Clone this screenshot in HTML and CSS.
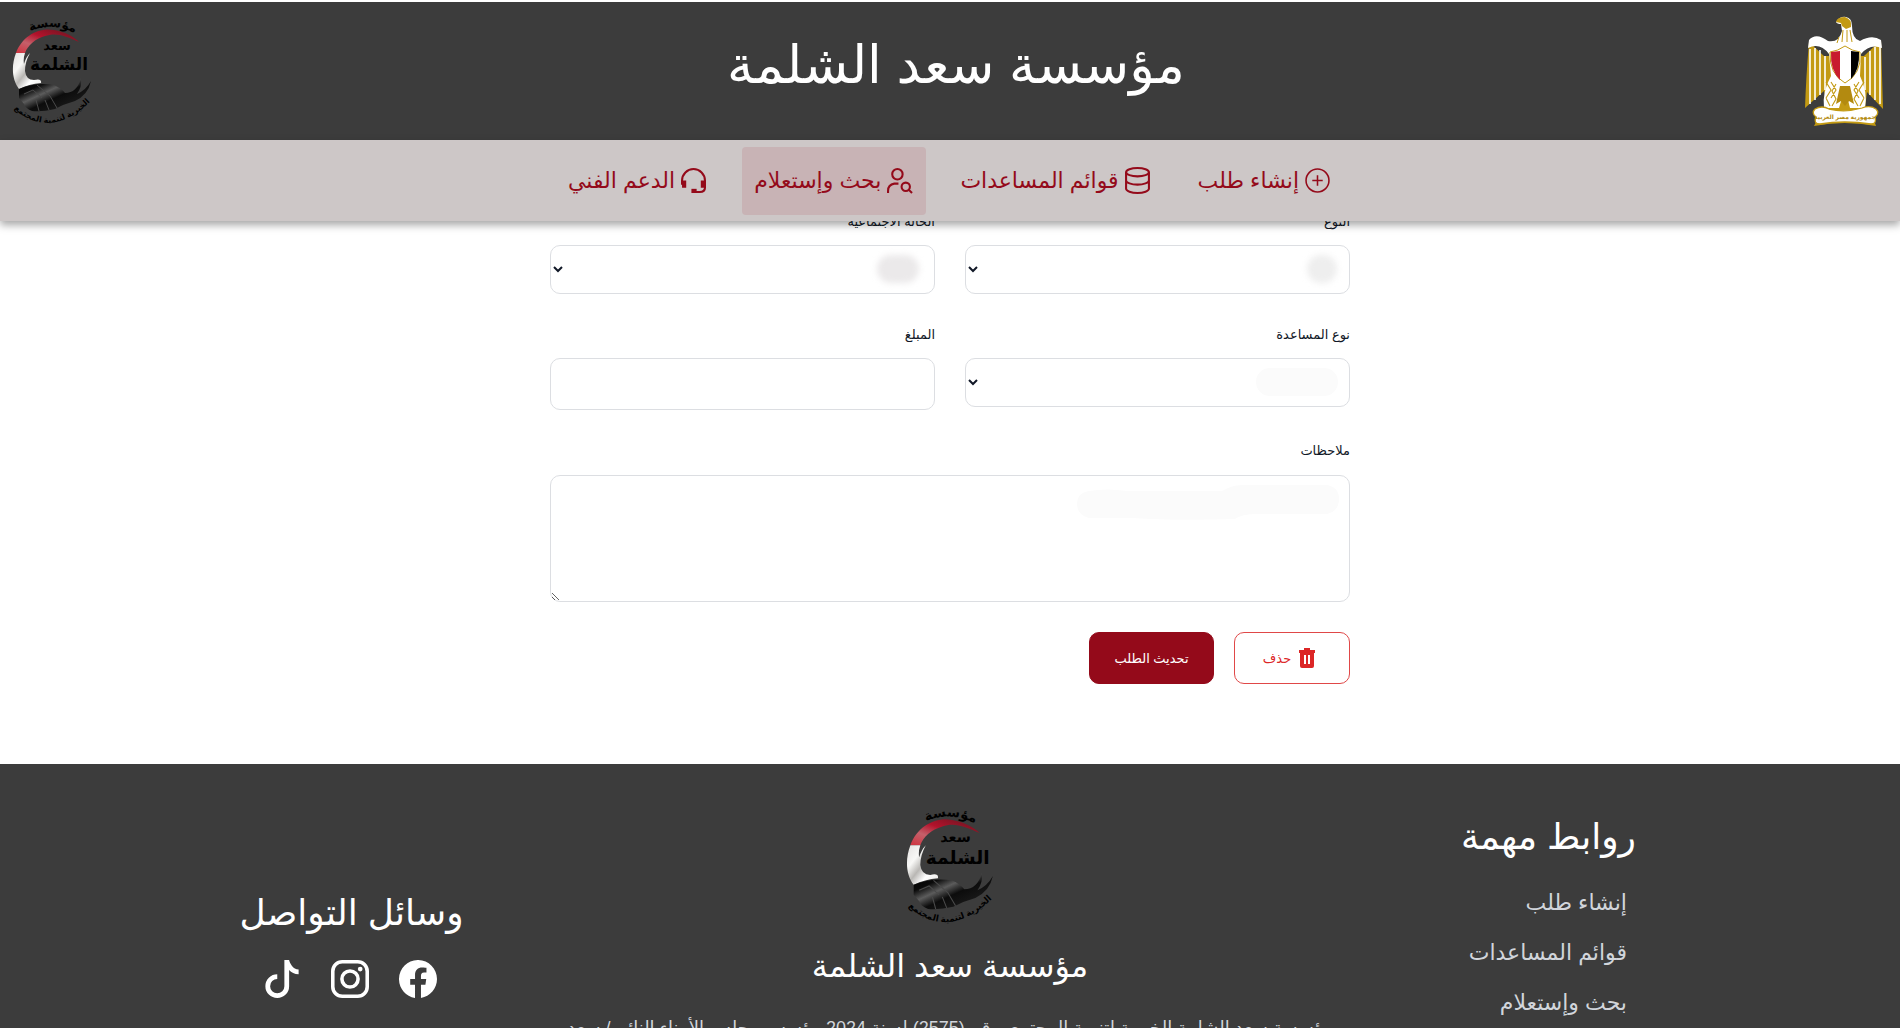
FILE: index.html
```html
<!DOCTYPE html>
<html lang="ar" dir="rtl">
<head>
<meta charset="utf-8">
<title>مؤسسة سعد الشلمة</title>
<meta name="viewport" content="width=device-width, initial-scale=1">
<link rel="stylesheet" href="styles.css">
</head>
<body>
<svg class="defs" aria-hidden="true">
  <defs>
    <linearGradient id="redBand" x1="0" y1="1" x2="1" y2="0"><stop offset="0" stop-color="#d0333f"/><stop offset=".3" stop-color="#c4606a"/><stop offset=".55" stop-color="#b3122b"/><stop offset="1" stop-color="#5d1620"/></linearGradient>
    <linearGradient id="whiteBand" x1="0" y1="0" x2="1" y2="1"><stop offset="0" stop-color="#e4e2e0"/><stop offset=".3" stop-color="#f8f8f6"/><stop offset=".5" stop-color="#b9b7b4"/><stop offset=".7" stop-color="#fff"/><stop offset="1" stop-color="#e9e8e5"/></linearGradient>
    <linearGradient id="hand" x1="0" y1="0" x2="1" y2="1"><stop offset="0" stop-color="#000"/><stop offset=".25" stop-color="#0a0a0a"/><stop offset=".4" stop-color="#5c5c5c"/><stop offset=".55" stop-color="#0c0c0c"/><stop offset="1" stop-color="#262626"/></linearGradient>
    <symbol id="logo" viewBox="0 0 80 106">
      <path id="arcTop" d="M15 15Q40 2 66 17" fill="none"/>
      <path id="arcBottom" d="M0 89Q38 124 80 82" fill="none"/>
      <text class="logo-arc-top"><textPath href="#arcTop" startOffset="50%" text-anchor="middle">مؤسسة</textPath></text>
      <path d="M4 35C10 18 27 9 42 12C53 14 61 18 67 24C54 18 44 14 33 18C23 21 16 27 13 35Z" fill="url(#redBand)"/>
      <path d="M4 35H13Q11 41 12 46Q14 39 18 35Q13 44 13 53Q14 62 22 62Q30 60 29 65Q17 66 7 71C0 62-1 48 4 35Z" fill="url(#whiteBand)"/>
      <path d="M7 71Q24 64 42 67Q49 70 53 75Q65 75 69 60Q70 69 65 76Q74 72 79 63Q76 77 63 83Q52 86 43 91Q30 94 20 93Q13 90 12 86L7 80Z" fill="url(#hand)"/>
      <path d="M12 76L21 72L30 80M25 67L38 78L45 90M24 82L27 93M33 82L37 92" fill="none" stroke="#4a4a4a" stroke-width="1"/>
      <text class="logo-name-small" x="45" y="32" text-anchor="middle">سعد</text>
      <text class="logo-name" x="47" y="52" text-anchor="middle">الشلمة</text>
      <text class="logo-arc"><textPath href="#arcBottom" startOffset="50%" text-anchor="middle">الخيرية لتنمية المجتمع</textPath></text>
    </symbol>
  </defs>
</svg>

<div class="app">
  <header class="topbar">
    <svg class="eagle" viewBox="0 0 80 110" role="img" aria-label="جمهورية مصر العربية">
      <path d="M5 26Q2 62 1 92L20 75L24 92Q16 93 9 96L13 104L10 110Q40 104 72 110L70 104L74 98L61 92L63 76L79 93Q78 60 77 24L60 40H20Z" fill="#c39a13"/>
      <path d="M5 24Q12 16 24 25Q35 27 38 15L37 8Q33 8 32 6Q36 0 42 1Q48 2 48 10Q48 23 56 25Q68 18 77 24L78 32Q66 27 57 38L56 60Q64 76 61 92H46L41 72L35 92H20Q18 76 27 60L25 38Q16 26 4 32Z" fill="#fff"/>
      <path d="M32 6Q33 1 41 1Q48 3 47 11L42 13L38 10L37 7Z" fill="#c39a13"/>
      <path d="M6 33V88M11 32V84M16 34V79M21 40V74M76 31V88M71 31V84M66 35V79M61 41V74" stroke="#fff" stroke-width="1.6"/>
      <path d="M39 14L38 26M43 14V26M46 14L48 26M35 21L33 27" stroke="#c39a13" stroke-width="1"/>
      <path d="M22 66l5 8-5 8m5-16l5 8-5 8m-5 0l4 8m6-22l-4 7 4 8-4 7M60 66l-5 8 5 8m-5-16l-5 8 5 8m5 0l-4 8m-6-22l4 7-4 8 4 7" fill="none" stroke="#c39a13" stroke-width="1.1"/>
      <path d="M36 70H46L50 88L45 85L41 90L37 85L32 88Z" fill="#b38a10"/>
      <path d="M26 36Q34 35 41 30Q48 35 56 36Q58 58 41 67Q25 58 26 36Z" fill="#fff" stroke="#c39a13"/>
      <path d="M27 36L36 35V64Q26 54 27 36Z" fill="#c81c2e"/>
      <path d="M47 35L55 36Q56 54 47 63Z" fill="#000"/>
      <path d="M11 93Q18 89 25 93Q41 97 58 92Q66 89 72 93Q76 97 71 101Q73 108 67 108Q40 104 16 108Q9 108 12 101Q7 97 11 93Z" fill="#fff" stroke="#c39a13" stroke-width="1.3"/>
      <text class="eagle-text" x="41" y="103" text-anchor="middle">جمهورية مصر العربية</text>
    </svg>
    <h1 class="title">مؤسسة سعد الشلمة</h1>
    <svg class="logo" role="img" aria-label="شعار المؤسسة"><use href="#logo"/></svg>
  </header>

  <nav class="nav">
    <a class="nav-link" href="#create">
      <svg class="icon" viewBox="0 0 24 24"><circle cx="12" cy="12" r="11" stroke-width="1.5"/><path d="M12 7v10M7 12h10" stroke-width="1.5"/></svg>
      <span>إنشاء طلب</span></a>
    <a class="nav-link" href="#lists">
      <svg class="icon icon-tall" viewBox="0 0 24 26"><ellipse cx="12" cy="5" rx="11" ry="4"/><path d="M1 5v16c0 2 5 4 11 4s11-2 11-4V5M1 13c0 2 5 4 11 4s11-2 11-4"/></svg>
      <span>قوائم المساعدات</span></a>
    <a class="nav-link active" href="#search">
      <svg class="icon" viewBox="0 0 24 24"><circle cx="10" cy="6" r="5"/><path d="M1 24v-2q0-6 6-7h4"/><circle cx="18" cy="18" r="4"/><path d="M21 21l3 3"/></svg>
      <span>بحث وإستعلام</span></a>
    <a class="nav-link" href="#support">
      <svg class="icon" viewBox="0 0 24 24"><path d="M1 16v-4a11 11 0 0 1 22 0v7q0 4-5 4h-6"/><path d="M3 12v7M21 12v7" stroke-width="4"/><path d="M10 22h5" stroke-width="4"/></svg>
      <span>الدعم الفني</span></a>
  </nav>

  <div class="viewport">
    <main class="main">
      <form class="form">
        <div class="field">
          <label for="gender">النوع</label>
          <div class="control"><select id="gender"><option></option></select><span class="smudge smudge-dot"></span></div>
        </div>
        <div class="field">
          <label for="marital">الحالة الاجتماعية</label>
          <div class="control"><select id="marital"><option></option></select><span class="smudge smudge-oval"></span></div>
        </div>
        <div class="field">
          <label for="aid">نوع المساعدة</label>
          <div class="control"><select id="aid"><option></option></select><span class="smudge smudge-pill"></span></div>
        </div>
        <div class="field">
          <label for="amount">المبلغ</label>
          <input id="amount" type="text">
        </div>
        <div class="field wide">
          <label for="notes">ملاحظات</label>
          <div class="control"><textarea id="notes"></textarea>
            <svg class="smudge-notes" viewBox="0 0 262 36"><path d="M12 6Q30 3 50 6H145Q155 0 165 0H250Q262 2 262 14T250 29H180Q165 29 158 34Q100 36 55 33H12Q0 30 0 19T12 6Z"/></svg></div>
        </div>
        <div class="actions wide">
          <button class="btn btn-delete" type="button">
            <svg class="trash" viewBox="0 0 16 20"><path d="M5 0h6v2h5v3H0V2h5zM1 5h14v13q0 2-2 2H3q-2 0-2-2z"/><path d="M6 7v9M10 7v9" stroke="#fff" stroke-width="2"/></svg>
            <span>حذف</span></button>
          <button class="btn btn-submit" type="submit">تحديث الطلب</button>
        </div>
      </form>
    </main>

    <footer class="footer">
      <section class="links">
        <h2>روابط مهمة</h2>
        <ul>
          <li><a href="#create">إنشاء طلب</a></li>
          <li><a href="#lists">قوائم المساعدات</a></li>
          <li><a href="#search">بحث وإستعلام</a></li>
        </ul>
      </section>
      <section class="about">
        <svg class="logo logo-large" role="img" aria-label="شعار المؤسسة"><use href="#logo"/></svg>
        <h2>مؤسسة سعد الشلمة</h2>
        <p>مؤسسة سعد الشلمة الخيرية لتنمية المجتمع برقم (2575) لسنة 2024 مؤسس مجلس الأمناء النائب/ سعد</p>
      </section>
      <section class="social">
        <h2>وسائل التواصل</h2>
        <div class="social-icons">
          <a href="#facebook" aria-label="فيسبوك"><svg viewBox="0 0 16 16"><path d="M16 8.049c0-4.446-3.582-8.05-8-8.05C3.58 0-.002 3.603-.002 8.05c0 4.017 2.926 7.347 6.75 7.951v-5.625h-2.03V8.05H6.75V6.275c0-2.017 1.195-3.131 3.022-3.131.876 0 1.791.157 1.791.157v1.98h-1.009c-.993 0-1.303.621-1.303 1.258v1.51h2.218l-.354 2.326H9.25V16c3.824-.604 6.75-3.934 6.75-7.951"/></svg></a>
          <a href="#instagram" aria-label="إنستغرام"><svg viewBox="0 0 16 16"><rect x=".75" y=".75" width="14.5" height="14.5" rx="4" fill="none" stroke="#fff" stroke-width="1.5"/><circle cx="8" cy="8" r="3.4" fill="none" stroke="#fff" stroke-width="1.5"/><circle cx="12.3" cy="3.8" r="1"/></svg></a>
          <a href="#tiktok" aria-label="تيك توك"><svg viewBox="0 0 16 16"><path d="M9 0h1.98c.144.715.54 1.617 1.235 2.512C12.895 3.389 13.797 4 15 4v2c-1.753 0-3.07-.814-4-1.829V11a5 5 0 1 1-5-5v2a3 3 0 1 0 3 3z"/></svg></a>
        </div>
      </section>
    </footer>
  </div>
</div>
</body>
</html>
```
FILE: styles.css
```css
* { box-sizing: border-box; }
body {
  margin: 0;
  background: #fff;
  color: #111827;
  font-family: "Liberation Sans", "DejaVu Sans", sans-serif;
}
h1, h2, p, ul { margin: 0; padding: 0; font-weight: 400; }
ul { list-style: none; }
a { text-decoration: none; color: inherit; }
.defs { position: absolute; width: 0; height: 0; }

.app {
  display: flex;
  flex-direction: column;
  height: 100vh;
  padding: 2px 0;
  overflow: hidden;
}

.topbar {
  display: flex;
  flex: none;
  align-items: center;
  justify-content: space-between;
  height: 138px;
  padding: 0 16px 0 12px;
  background: #3c3c3c;
  color: #fff;
}
.title { font-size: 53px; line-height: 72px; padding-bottom: 12px; }
.eagle { width: 80px; height: 110px; }
.logo { width: 80px; height: 106px; overflow: visible; }
.topbar .logo { margin-right: 16px; }
.logo-large { width: 88px; height: 118px; }
.logo-arc { font-size: 8px; font-weight: 700; }
.logo-arc-top { font-size: 12px; font-weight: 700; }
.logo-name-small { font-size: 13px; font-weight: 700; }
.logo-name { font-size: 17px; font-weight: 700; }
.eagle-text { font-size: 6px; font-weight: 700; fill: #b38a10; }

.nav {
  position: relative;
  z-index: 1;
  display: flex;
  flex: none;
  align-items: center;
  justify-content: center;
  gap: 22px;
  height: 81px;
  background: #cdc7c7;
  box-shadow: 0 4px 8px rgba(0, 0, 0, .35);
  color: #940a1a;
}
.nav-link {
  display: flex;
  align-items: center;
  gap: 6px;
  height: 68px;
  padding: 0 14px 0 12px;
  border-radius: 4px;
  font-size: 22px;
}
.nav-link.active { background: #c8b3b5; }
.icon { width: 25px; height: 25px; fill: none; stroke: currentColor; stroke-width: 2; overflow: visible; }
.icon-tall { height: 27px; }

.viewport { flex: 1; min-height: 0; overflow: hidden; }
.main { padding: 0 24px 80px; }
.form {
  display: grid;
  grid-template-columns: 1fr 1fr;
  gap: 30px;
  align-items: start;
  max-width: 800px;
  margin: -10px auto 0;
}
.wide { grid-column: 1 / -1; }
.field { display: flex; flex-direction: column; gap: 12px; }
.field.wide { gap: 13px; }
.field label { font-size: 13px; line-height: 22px; }
.control { position: relative; display: flex; }
select, input, textarea {
  width: 100%;
  padding: 12px;
  border: 1px solid #dcdee2;
  border-radius: 10px;
  background: #fff;
  color: #111827;
  font: inherit;
}
select { height: 49px; padding: 0; }
input { height: 52px; }
textarea { height: 127px; resize: vertical; }

.smudge { position: absolute; top: 10px; height: 28px; border-radius: 14px; pointer-events: none; }
.smudge-dot { right: 13px; width: 30px; background: #eee; filter: blur(3px); }
.smudge-oval { right: 16px; width: 42px; background: #ebe9ea; filter: blur(3px); }
.smudge-pill { right: 12px; width: 82px; background: #fbfbfb; }
.smudge-notes { position: absolute; top: 10px; right: 11px; width: 262px; height: 36px; fill: #fbfbfb; pointer-events: none; }

.actions { display: flex; gap: 20px; }
.btn {
  display: flex;
  align-items: center;
  justify-content: center;
  gap: 8px;
  height: 52px;
  border: 1px solid #940a1a;
  border-radius: 10px;
  font-family: inherit;
  font-size: 13px;
}
.btn-delete { width: 116px; padding: 0 12px 0 6px; background: #fff; border-color: #e04848; color: #dc2626; }
.btn-submit { width: 125px; background: #940a1a; color: #fff; }
.trash { width: 16px; height: 20px; fill: currentColor; }

.footer {
  display: grid;
  grid-template-columns: 1fr 2fr 1fr;
  justify-items: center;
  align-items: start;
  min-height: 400px;
  padding: 42px 8%;
  background: #3c3c3c;
  color: #fff;
}
.footer h2 { font-size: 36px; line-height: 54px; }
.links { padding-top: 4px; }
.links ul { padding: 14px 9px 0 0; }
.links li { font-size: 22px; line-height: 50px; color: #d1d5db; }
.about { display: flex; flex-direction: column; align-items: center; }
.footer .about h2 { padding-top: 18px; font-size: 32px; line-height: 48px; }
.about p { padding-top: 22px; color: #d1d5db; font-size: 18px; line-height: 32px; text-align: center; }
.social { padding-top: 80px; }
.social-icons { display: flex; justify-content: center; gap: 30px; padding: 20px 4px 0 0; }
.social-icons svg { display: block; width: 38px; height: 38px; fill: #fff; }
```
